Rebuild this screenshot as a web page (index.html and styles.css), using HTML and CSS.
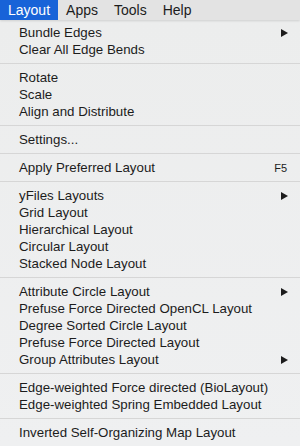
FILE: index.html
```html
<!DOCTYPE html>
<html lang="en">
<head>
  <meta charset="UTF-8" />
  <title>Layout menu</title>
  <link rel="stylesheet" href="styles.css">
</head>
<body>

  <nav class="menubar">
    <span class="menubar-item active">Layout</span>
    <span class="menubar-item">Apps</span>
    <span class="menubar-item">Tools</span>
    <span class="menubar-item">Help</span>
  </nav>

  <div class="menu">
    <div class="item">Bundle Edges <span class="arrow"></span></div>
    <div class="item">Clear All Edge Bends</div>
    <hr class="sep">
    <div class="item">Rotate</div>
    <div class="item">Scale</div>
    <div class="item">Align and Distribute</div>
    <hr class="sep">
    <div class="item">Settings...</div>
    <hr class="sep">
    <div class="item">Apply Preferred Layout <span class="shortcut">F5</span></div>
    <hr class="sep">
    <div class="item">yFiles Layouts <span class="arrow"></span></div>
    <div class="item">Grid Layout</div>
    <div class="item">Hierarchical Layout</div>
    <div class="item">Circular Layout</div>
    <div class="item">Stacked Node Layout</div>
    <hr class="sep">
    <div class="item">Attribute Circle Layout <span class="arrow"></span></div>
    <div class="item">Prefuse Force Directed OpenCL Layout</div>
    <div class="item">Degree Sorted Circle Layout</div>
    <div class="item">Prefuse Force Directed Layout</div>
    <div class="item">Group Attributes Layout <span class="arrow"></span></div>
    <hr class="sep">
    <div class="item">Edge-weighted Force directed (BioLayout)</div>
    <div class="item">Edge-weighted Spring Embedded Layout</div>
    <hr class="sep">
    <div class="item">Inverted Self-Organizing Map Layout</div>
  </div>

</body>
</html>
```

FILE: styles.css
```css
body {
  margin: 0;
  font-family: 'Liberation Sans', Arial, sans-serif;
  font-size: 14px;
  color: #1c1c1c;
  background: #ececec;
  overflow: hidden;
}

.menubar {
  display: flex;
  height: 20px;
  background: #e3e3e3;
  position: relative;
  z-index: 2;
  box-shadow: 0 1px 2px rgba(0, 0, 0, 0.12);
}

.menubar-item {
  padding: 0 8px;
  line-height: 20px;
}

.menubar-item.active {
  background: #1863d8;
  color: #fff;
}

.menu {
  background: linear-gradient(to bottom, #eceded, #eff0f1);
  padding: 4px 0 6px;
  font-size: 13.3px;
}

.item {
  display: flex;
  justify-content: space-between;
  align-items: center;
  height: 17px;
  padding: 0 12px 0 19px;
  white-space: nowrap;
}

.arrow {
  width: 0;
  height: 0;
  border-top: 4px solid transparent;
  border-bottom: 4px solid transparent;
  border-left: 7px solid #1c1c1c;
}

.shortcut {
  font-size: 11px;
  margin-right: 1px;
}

.sep {
  border: none;
  border-top: 1px solid #d6d6d6;
  margin: 5px 0;
}
```
